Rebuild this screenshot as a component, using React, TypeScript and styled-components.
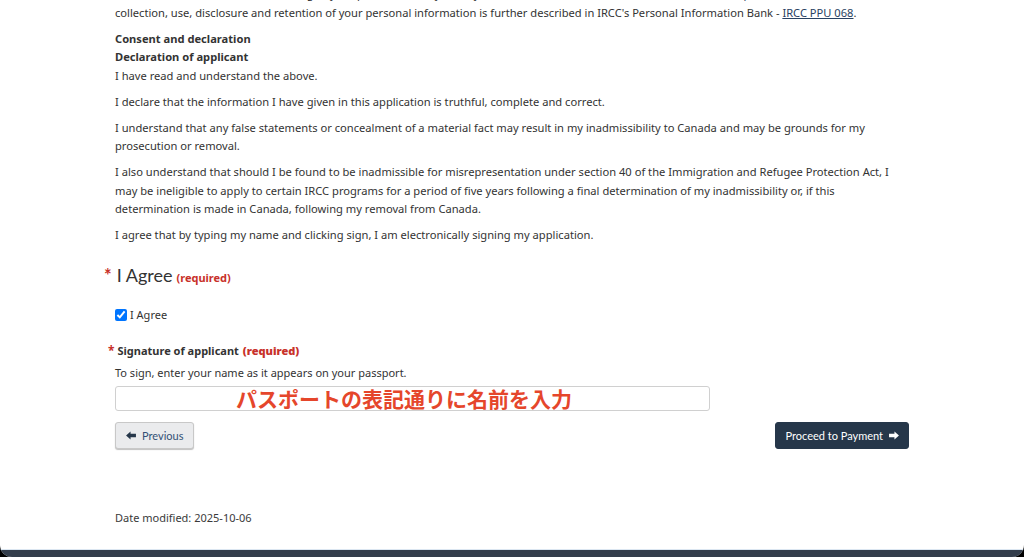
import { FC } from "react";
import styled, { createGlobalStyle } from "styled-components";

const GlobalStyle = createGlobalStyle`
  html, body {
    margin: 0;
    padding: 0;
    background-color: #000;
  }
`;

const Window = styled.div`
  width: 1024px;
  height: 557px;
  overflow: hidden;
  border-radius: 0 0 12px 12px;
  background-color: #fff;
  display: flex;
  flex-direction: column;
  font-family: "Noto Sans", "Open Sans", sans-serif;
  color: #333;
`;

const Main = styled.main`
  flex: 1;
  width: 794px;
  padding-left: 115px;
  font-size: 11.15px;
  line-height: 18.5px;
`;

const Para = styled.p<{ $cut?: boolean }>`
  margin: ${(p) => (p.$cut ? "-15px" : "0")} 0 7.5px;
`;

const TextLink = styled.a`
  color: #284162;
  text-decoration: underline;
`;

const Legend = styled.div`
  display: flex;
  align-items: baseline;
  margin: 17px 0 0 -11px;
  font-family: Lato, "Noto Sans", sans-serif;
  font-size: 18px;
  line-height: 26px;
  color: #333;
`;

const Star = styled.span<{ $small?: boolean }>`
  color: #c8312a;
  font-weight: 700;
  font-size: ${(p) => (p.$small ? "12px" : "18px")};
  margin-right: ${(p) => (p.$small ? "3px" : "5px")};
`;

const Required = styled.strong`
  color: #c8312a;
  font-family: "Noto Sans", sans-serif;
  font-size: 11px;
  margin-left: 4px;
`;

const CheckRow = styled.label`
  display: flex;
  align-items: center;
  margin-top: 15px;
  font-size: 11px;

  input {
    width: 12px;
    height: 12px;
    margin: 0 3px 0 0;
  }
`;

const FieldLabel = styled.div`
  display: flex;
  align-items: baseline;
  margin: 18px 0 0 -7px;
  font-size: 11px;
  font-weight: 700;
`;

const Hint = styled.div`
  margin-top: 4px;
  font-size: 11px;
  line-height: 16px;
`;

const InputWrap = styled.div`
  position: relative;
  width: 595px;
  margin-top: 5px;
`;

const TextInput = styled.input`
  display: block;
  box-sizing: border-box;
  width: 100%;
  height: 25px;
  border: 1px solid #d0d0d0;
  border-radius: 3px;
  background: #fff;
`;

const Note = styled.span`
  position: absolute;
  left: 121px;
  top: 0;
  font-family: "Noto Sans CJK JP", sans-serif;
  font-weight: 700;
  font-size: 21px;
  line-height: 25px;
  color: #e5462b;
  white-space: nowrap;
  pointer-events: none;
`;

const ButtonRow = styled.div`
  display: flex;
  justify-content: space-between;
  margin-top: 11px;
`;

const Button = styled.button<{ $primary?: boolean }>`
  display: inline-flex;
  align-items: center;
  gap: 6px;
  height: 27px;
  padding: 0 ${(p) => (p.$primary ? "9px" : "10px")};
  border-radius: 3px;
  font-family: Lato, "Noto Sans", sans-serif;
  font-size: 11px;
  border: 1px solid ${(p) => (p.$primary ? "#26374a" : "#c8c8c8")};
  background-color: ${(p) => (p.$primary ? "#26374a" : "#eaebed")};
  color: ${(p) => (p.$primary ? "#fff" : "#335075")};
  box-shadow: ${(p) => (p.$primary ? "none" : "0 1px 1px rgba(0,0,0,0.25)")};
`;

const Modified = styled.div`
  margin-top: 60px;
  font-size: 11px;
  color: #3a3a3a;
`;

const FooterBand = styled.div`
  height: 7px;
  background-color: #333d4b;
  border-top: 1px solid #dbe6f1;
`;

const Arrow: FC<{ dir: "left" | "right"; color: string }> = ({ dir, color }) => (
  <svg width="10" height="9" viewBox="0 0 11 10">
    <path
      d={dir === "left" ? "M0 5 L5 0.5 L5 3 L11 3 L11 7 L5 7 L5 9.5 Z" : "M11 5 L6 0.5 L6 3 L0 3 L0 7 L6 7 L6 9.5 Z"}
      fill={color}
    />
  </svg>
);

const App: FC = () => {
  return (
    <Window>
      <GlobalStyle />
      <Main>
        <Para $cut>
          For more information on the handling of your personal data, you may also refer to the{" "}
          <TextLink href="#">Personal Information Bank descriptions</TextLink>. The
          <br />
          collection, use, disclosure and retention of your personal information is further described in IRCC's Personal
          Information Bank - <TextLink href="#">IRCC PPU 068</TextLink>.
        </Para>
        <Para>
          <strong>Consent and declaration</strong>
          <br />
          <strong>Declaration of applicant</strong>
          <br />I have read and understand the above.
        </Para>
        <Para>I declare that the information I have given in this application is truthful, complete and correct.</Para>
        <Para>
          I understand that any false statements or concealment of a material fact may result in my inadmissibility to
          Canada and may be grounds for my prosecution or removal.
        </Para>
        <Para>
          I also understand that should I be found to be inadmissible for misrepresentation under section 40 of the
          Immigration and Refugee Protection Act, I may be ineligible to apply to certain IRCC programs for a period of
          five years following a final determination of my inadmissibility or, if this determination is made in Canada,
          following my removal from Canada.
        </Para>
        <Para>I agree that by typing my name and clicking sign, I am electronically signing my application.</Para>

        <Legend>
          <Star>*</Star>I Agree<Required>(required)</Required>
        </Legend>
        <CheckRow>
          <input type="checkbox" defaultChecked />I Agree
        </CheckRow>

        <FieldLabel>
          <Star $small>*</Star>Signature of applicant<Required>(required)</Required>
        </FieldLabel>
        <Hint>To sign, enter your name as it appears on your passport.</Hint>
        <InputWrap>
          <TextInput type="text" />
          <Note>パスポートの表記通りに名前を入力</Note>
        </InputWrap>

        <ButtonRow>
          <Button>
            <Arrow dir="left" color="#26374a" />
            Previous
          </Button>
          <Button $primary>
            Proceed to Payment
            <Arrow dir="right" color="#fff" />
          </Button>
        </ButtonRow>

        <Modified>Date modified: 2025-10-06</Modified>
      </Main>
      <FooterBand />
    </Window>
  );
};

export default App;
